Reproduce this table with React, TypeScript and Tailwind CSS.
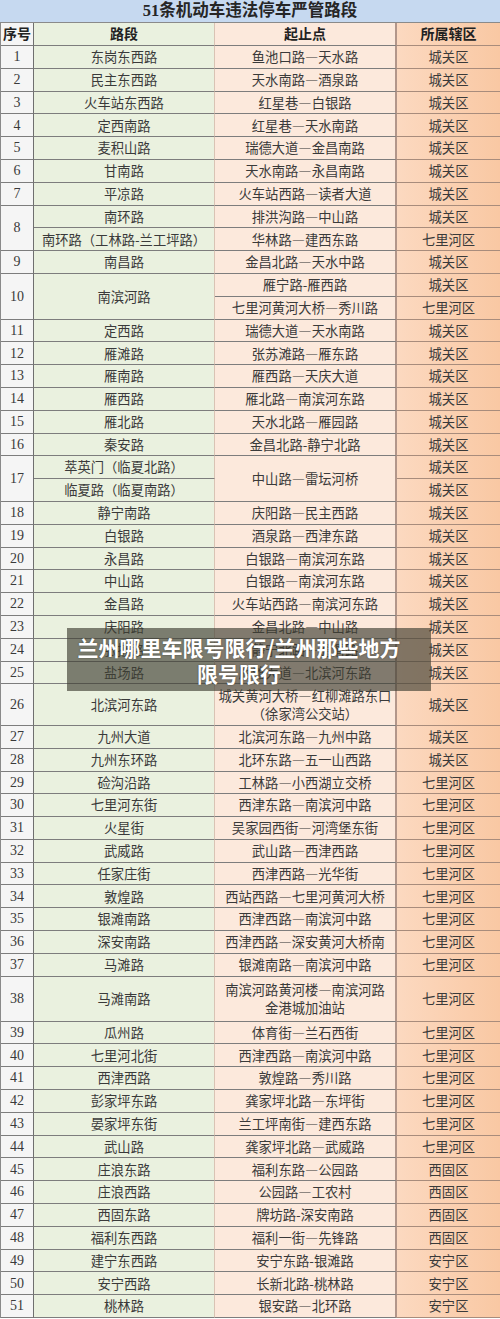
import clsx from "clsx";

type Row = [string, string, string, string];

const first: Row[] = [
    ["1", "东岗东西路", "鱼池口路—天水路", "城关区"],
    ["2", "民主东西路", "天水南路—酒泉路", "城关区"],
    ["3", "火车站东西路", "红星巷—白银路", "城关区"],
    ["4", "定西南路", "红星巷—天水南路", "城关区"],
    ["5", "麦积山路", "瑞德大道—金昌南路", "城关区"],
    ["6", "甘南路", "天水南路—永昌南路", "城关区"],
    ["7", "平凉路", "火车站西路—读者大道", "城关区"],
];

const middle: Row[] = [
    ["11", "定西路", "瑞德大道—天水南路", "城关区"],
    ["12", "雁滩路", "张苏滩路—雁东路", "城关区"],
    ["13", "雁南路", "雁西路—天庆大道", "城关区"],
    ["14", "雁西路", "雁北路—南滨河东路", "城关区"],
    ["15", "雁北路", "天水北路—雁园路", "城关区"],
    ["16", "秦安路", "金昌北路-静宁北路", "城关区"],
];

const later: Row[] = [
    ["18", "静宁南路", "庆阳路—民主西路", "城关区"],
    ["19", "白银路", "酒泉路—西津东路", "城关区"],
    ["20", "永昌路", "白银路—南滨河东路", "城关区"],
    ["21", "中山路", "白银路—南滨河东路", "城关区"],
    ["22", "金昌路", "火车站西路—南滨河东路", "城关区"],
    ["23", "庆阳路", "金昌北路—中山路", "城关区"],
    ["24", "张掖路", "静宁北路—通渭路", "城关区"],
    ["25", "盐场路", "雁滩大道—北滨河东路", "城关区"],
    ["26", "北滨河东路", "城关黄河大桥—红柳滩路东口\n（徐家湾公交站）", "城关区"],
    ["27", "九州大道", "北滨河东路—九州中路", "城关区"],
    ["28", "九州东环路", "北环东路—五一山西路", "城关区"],
    ["29", "硷沟沿路", "工林路—小西湖立交桥", "七里河区"],
    ["30", "七里河东街", "西津东路—南滨河中路", "七里河区"],
    ["31", "火星街", "吴家园西街—河湾堡东街", "七里河区"],
    ["32", "武威路", "武山路—西津西路", "七里河区"],
    ["33", "任家庄街", "西津西路—光华街", "七里河区"],
    ["34", "敦煌路", "西站西路—七里河黄河大桥", "七里河区"],
    ["35", "银滩南路", "西津西路—南滨河中路", "七里河区"],
    ["36", "深安南路", "西津西路—深安黄河大桥南", "七里河区"],
    ["37", "马滩路", "银滩南路—南滨河中路", "七里河区"],
    ["38", "马滩南路", "南滨河路黄河楼—南滨河路\n金港城加油站", "七里河区"],
    ["39", "瓜州路", "体育街—兰石西街", "七里河区"],
    ["40", "七里河北街", "西津西路—南滨河中路", "七里河区"],
    ["41", "西津西路", "敦煌路—秀川路", "七里河区"],
    ["42", "彭家坪东路", "龚家坪北路—东坪街", "七里河区"],
    ["43", "晏家坪东街", "兰工坪南街—建西东路", "七里河区"],
    ["44", "武山路", "龚家坪北路—武威路", "七里河区"],
    ["45", "庄浪东路", "福利东路—公园路", "西固区"],
    ["46", "庄浪西路", "公园路—工农村", "西固区"],
    ["47", "西固东路", "牌坊路-深安南路", "西固区"],
    ["48", "福利东西路", "福利一街—先锋路", "西固区"],
    ["49", "建宁东西路", "安宁东路-银滩路", "安宁区"],
    ["50", "安宁西路", "长新北路-桃林路", "安宁区"],
    ["51", "桃林路", "银安路—北环路", "安宁区"],
];

const cjk = "font-['Noto_Sans_CJK_SC',sans-serif]";

const colCls = [
    "bg-[#f5f5f5] border-r-[#6f6f6f] font-['Liberation_Serif','Noto_Sans_CJK_SC',serif] text-[14px]",
    "bg-[#eaf1df] border-r-[#d9c3b4]",
    "bg-[#fce9dc] border-r-[#b2968a] border-r-2",
    "bg-linear-to-r from-[#fcd9c0] to-[#f9c8a3] border-r-[#e7b592]",
];

// the CJK font draws "—" narrow by default; the sheet shows a full-width one
function withDash(text: string) {
    const parts = text.split("—");
    return parts.map((p, i) => (
        <span key={i}>
            {i > 0 && <span className="[font-feature-settings:'fwid']">—</span>}
            {p}
        </span>
    ));
}

function Cell({ col, h, className, children }: { col: number; h?: string; className?: string; children: React.ReactNode }) {
    return (
        <div
            className={clsx(
                "flex items-center justify-center border-b border-r border-b-[#7d7d7d] text-center text-[13.3px] text-[#3a3a3a] whitespace-pre-line leading-[17.5px]",
                col === 3 && "border-b-[#a88c7c]",
                colCls[col],
                h,
                className
            )}
        >
            <div>{typeof children === "string" ? withDash(children) : children}</div>
        </div>
    );
}

function Line({ r, h = "h-[22.8px]" }: { r: Row; h?: string }) {
    return (
        <>
            <Cell col={0} h={h}>{r[0]}</Cell>
            <Cell col={1} h={h}>{r[1]}</Cell>
            <Cell col={2} h={h}>{r[2]}</Cell>
            <Cell col={3} h={h}>{r[3]}</Cell>
        </>
    );
}

export default function App() {
    return (
        <div className={clsx("relative w-[500px] h-[1319px] overflow-hidden bg-white", cjk)}>
            <div className="flex h-[23px] items-center justify-center border-b border-[#8a8a8a] bg-[#c6d9f0] font-['Liberation_Serif','Noto_Sans_CJK_SC',serif] text-[16.5px] font-semibold text-[#262626]">
                51条机动车违法停车严管路段
            </div>

            <div className="grid grid-cols-[33px_181px_182px_104px] border-l border-[#8a8a8a]">
                <Cell col={0} h="h-[23px]" className={clsx(cjk, "font-bold text-[14px] text-[#222]")}>序号</Cell>
                <Cell col={1} h="h-[23px]" className="font-bold text-[14px] text-[#222]">路段</Cell>
                <Cell col={2} h="h-[23px]" className="font-bold text-[14px] text-[#222]">起止点</Cell>
                <Cell col={3} h="h-[23px]" className="font-bold text-[14px] text-[#222]">所属辖区</Cell>

                {first.map((r) => <Line key={r[0]} r={r} />)}

                {/* 8: two sections */}
                <Cell col={0} className="row-span-2">8</Cell>
                <Cell col={1} h="h-[22.8px]">南环路</Cell>
                <Cell col={2} h="h-[22.8px]">排洪沟路—中山路</Cell>
                <Cell col={3} h="h-[22.8px]">城关区</Cell>
                <Cell col={1} h="h-[22.8px]">南环路（工林路-兰工坪路）</Cell>
                <Cell col={2} h="h-[22.8px]">华林路—建西东路</Cell>
                <Cell col={3} h="h-[22.8px]">七里河区</Cell>

                <Line r={["9", "南昌路", "金昌北路—天水中路", "城关区"]} />

                {/* 10 */}
                <Cell col={0} className="row-span-2">10</Cell>
                <Cell col={1} className="row-span-2">南滨河路</Cell>
                <Cell col={2} h="h-[22.8px]">雁宁路-雁西路</Cell>
                <Cell col={3} h="h-[22.8px]">城关区</Cell>
                <Cell col={2} h="h-[22.8px]">七里河黄河大桥—秀川路</Cell>
                <Cell col={3} h="h-[22.8px]">七里河区</Cell>

                {middle.map((r) => <Line key={r[0]} r={r} />)}

                {/* 17 */}
                <Cell col={0} className="row-span-2">17</Cell>
                <Cell col={1} h="h-[22.8px]">萃英门（临夏北路）</Cell>
                <Cell col={2} className="row-span-2">中山路—雷坛河桥</Cell>
                <Cell col={3} h="h-[22.8px]">城关区</Cell>
                <Cell col={1} h="h-[22.8px]">临夏路（临夏南路）</Cell>
                <Cell col={3} h="h-[22.8px]">城关区</Cell>

                {later.map((r) => (
                    <Line
                        key={r[0]}
                        r={r}
                        h={r[0] === "26" ? "h-[41.6px]" : r[0] === "38" ? "h-[45px]" : "h-[22.8px]"}
                    />
                ))}
            </div>

            {/* watermark caption */}
            <div className="absolute left-[67px] top-[628px] flex h-[63px] w-[364px] items-center bg-[#3f3f33]/65 pl-[8px] pr-[28px]">
                <p className="w-full text-center text-[21px] font-bold leading-[26px] text-white [text-shadow:0_0_2px_rgba(0,0,0,0.4)]">
                    兰州哪里车限号限行/兰州那些地方限号限行
                </p>
            </div>
        </div>
    );
}
